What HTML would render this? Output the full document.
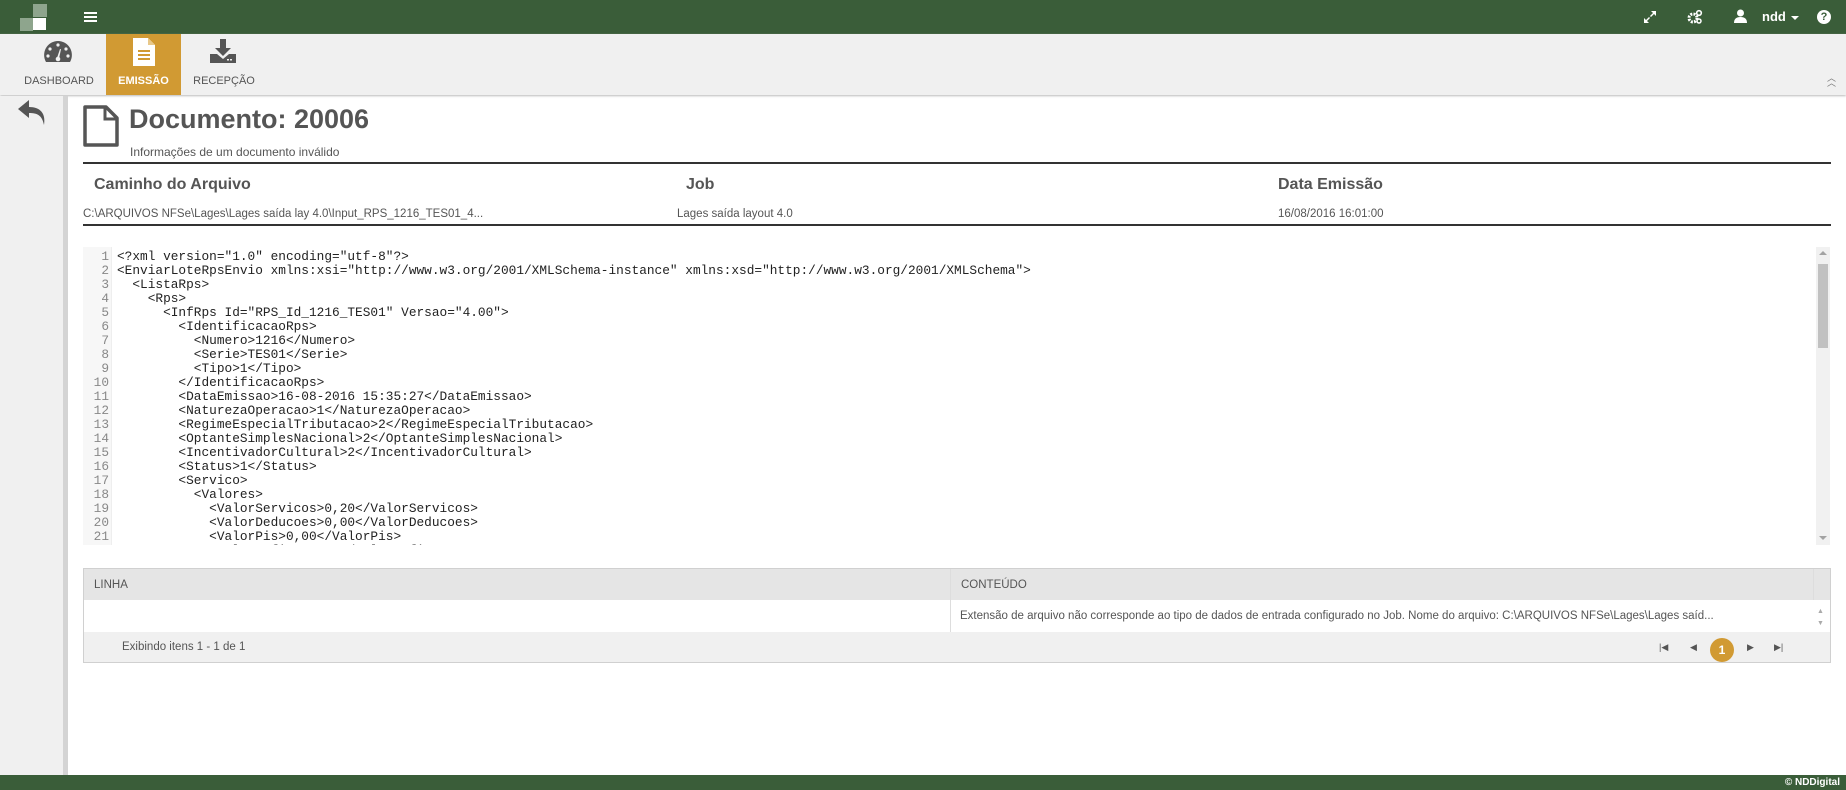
<!DOCTYPE html>
<html><head><meta charset="utf-8"><style>
*{margin:0;padding:0;box-sizing:border-box}
body{width:1846px;height:790px;overflow:hidden;background:#fff;font-family:"Liberation Sans",sans-serif;color:#555;position:relative}
.abs{position:absolute}
#top{left:0;top:0;width:1846px;height:34px;background:#3a5d39}
#nav{left:0;top:34px;width:1846px;height:61px;background:#f0f0f0;box-shadow:0 1px 2px #bbb}
.tab{position:absolute;top:0;height:61px;text-align:center;font-size:11px;color:#555}
.tab span{position:absolute;left:0;right:0;top:41px}
#side{left:0;top:96px;width:68px;height:679px;background:#f0f0f0;border-right:5px solid #d4d4d4}
.hdr{font-size:16px;font-weight:bold;color:#555;top:176px}
.val{font-size:11.5px;color:#555;top:208px}
#code{left:83px;top:247px;width:1747px;height:298px;overflow:hidden;background:#fff}
#gut{left:0;top:0;width:29px;height:298px;background:#f7f7f7;border-right:1px solid #eee}
pre{font-family:"Liberation Mono",monospace;font-size:12.8px;line-height:14px;color:#222}
#nums{position:absolute;left:0;top:3px;width:26px;text-align:right;color:#888}
#src{position:absolute;left:34px;top:3px}
#grid{left:83px;top:568px;width:1748px;height:95px;border:1px solid #d0d0d0;background:#f0f0f0}
</style></head><body>
<div id="top" class="abs">
  <div class="abs" style="left:33px;top:4px;width:14px;height:13px;background:#8ea58d"></div>
  <div class="abs" style="left:20px;top:18px;width:13px;height:13px;background:#8ea58d"></div>
  <div class="abs" style="left:33px;top:18px;width:13px;height:12px;background:#fff"></div>
  <div class="abs" style="left:84px;top:12px;width:13px;height:2px;background:#fff;box-shadow:0 4px 0 #fff,0 8px 0 #fff"></div>
  <svg class="abs" style="left:1643px;top:10px" width="14" height="14" viewBox="0 0 14 14"><path d="M8 1h5v5l-2-2-3 3-1-1 3-3zM6 13H1V8l2 2 3-3 1 1-3 3z" fill="#fff"/></svg>
  <svg class="abs" style="left:1687px;top:9px" width="16" height="16" viewBox="0 0 16 16"><circle cx="6" cy="9" r="4" fill="none" stroke="#fff" stroke-width="3" stroke-dasharray="2 1.2"/><circle cx="12" cy="4" r="2.3" fill="none" stroke="#fff" stroke-width="1.6"/><circle cx="12" cy="12" r="2" fill="none" stroke="#fff" stroke-width="1.5"/></svg>
  <svg class="abs" style="left:1734px;top:9px" width="13" height="14" viewBox="0 0 13 14"><circle cx="6.5" cy="4" r="3.5" fill="#fff"/><path d="M0 14q0-6 6.5-6t6.5 6z" fill="#fff"/></svg>
  <div class="abs" style="left:1762px;top:9px;color:#fff;font-size:13px;font-weight:bold">ndd</div>
  <div class="abs" style="left:1791px;top:16px;border:4px solid transparent;border-top:4px solid #fff"></div>
  <div class="abs" style="left:1817px;top:10px;width:14px;height:14px;border-radius:50%;background:#fff;color:#3a5d39;font-size:11px;font-weight:bold;text-align:center;line-height:14px">?</div>
</div>
<div id="nav" class="abs">
  <div class="tab" style="left:18px;width:82px">
    <svg class="abs" style="left:25px;top:6px" width="30" height="25" viewBox="0 0 30 25"><path d="M15 1A14 14 0 0 0 3 22h24A14 14 0 0 0 15 1z" fill="#555"/><circle cx="15" cy="5" r="1.6" fill="#f0f0f0"/><circle cx="7" cy="9" r="1.6" fill="#f0f0f0"/><circle cx="23" cy="9" r="1.6" fill="#f0f0f0"/><circle cx="5" cy="16" r="1.6" fill="#f0f0f0"/><circle cx="25" cy="16" r="1.6" fill="#f0f0f0"/><path d="M14 18l3-9 1 .3-2 9.2z" fill="#f0f0f0"/><circle cx="15" cy="19" r="2.3" fill="#f0f0f0"/></svg>
    <span>DASHBOARD</span></div>
  <div class="tab" style="left:106px;width:75px;background:#d19a33;color:#fff;font-weight:bold">
    <svg class="abs" style="left:26px;top:4px" width="24" height="28" viewBox="0 0 24 28"><path d="M1 0h15l7 7v21H1z" fill="#fff"/><path d="M16 0v7h7" fill="#e8c88a"/><rect x="6" y="12" width="12" height="2" fill="#d19a33"/><rect x="6" y="16" width="12" height="2" fill="#d19a33"/><rect x="6" y="20" width="12" height="2" fill="#d19a33"/></svg>
    <span>EMISSÃO</span></div>
  <div class="tab" style="left:190px;width:68px">
    <svg class="abs" style="left:20px;top:5px" width="26" height="24" viewBox="0 0 26 24"><path d="M10 0h6v9h5l-8 8-8-8h5z" fill="#555"/><path d="M0 15h7l6 5 6-5h7v9H0z" fill="#555"/><rect x="20" y="20" width="2" height="1.5" fill="#f0f0f0"/><rect x="17" y="20" width="2" height="1.5" fill="#f0f0f0"/></svg>
    <span>RECEPÇÃO</span></div>
  <div class="abs" style="left:1827px;top:42px;font-size:9px;color:#777;line-height:5px">︿<br>︿</div>
</div>
<div id="side" class="abs">
  <svg class="abs" style="left:18px;top:4px" width="30" height="26" viewBox="0 0 30 26"><path d="M11 0L0 9l11 9v-5c8 0 13 2 15 12 2-12-4-18-15-18z" fill="#555"/></svg>
</div>
<svg class="abs" style="left:83px;top:105px" width="36" height="42" viewBox="0 0 36 42"><path d="M2 2h21l11 11v27H2z" fill="none" stroke="#555" stroke-width="3.5" stroke-linejoin="round"/><path d="M22 2v12h12" fill="none" stroke="#555" stroke-width="3"/></svg>
<div class="abs" style="left:129px;top:104px;font-size:27px;font-weight:bold;color:#555">Documento: 20006</div>
<div class="abs" style="left:130px;top:145px;font-size:12px;color:#555">Informações de um documento inválido</div>
<div class="abs" style="left:83px;top:162px;width:1748px;height:2px;background:#333"></div>
<div class="abs hdr" style="left:94px">Caminho do Arquivo</div>
<div class="abs hdr" style="left:686px">Job</div>
<div class="abs hdr" style="left:1278px">Data Emissão</div>
<div class="abs val" style="left:83px">C:\ARQUIVOS NFSe\Lages\Lages saída lay 4.0\Input_RPS_1216_TES01_4...</div>
<div class="abs val" style="left:677px">Lages saída layout 4.0</div>
<div class="abs val" style="left:1278px">16/08/2016 16:01:00</div>
<div class="abs" style="left:83px;top:224px;width:1748px;height:2px;background:#333"></div>
<div id="code" class="abs">
  <div id="gut" class="abs"></div>
<pre id="nums">1
2
3
4
5
6
7
8
9
10
11
12
13
14
15
16
17
18
19
20
21
22</pre>
<pre id="src">&lt;?xml version="1.0" encoding="utf-8"?&gt;
&lt;EnviarLoteRpsEnvio xmlns:xsi="http://www.w3.org/2001/XMLSchema-instance" xmlns:xsd="http://www.w3.org/2001/XMLSchema"&gt;
  &lt;ListaRps&gt;
    &lt;Rps&gt;
      &lt;InfRps Id="RPS_Id_1216_TES01" Versao="4.00"&gt;
        &lt;IdentificacaoRps&gt;
          &lt;Numero&gt;1216&lt;/Numero&gt;
          &lt;Serie&gt;TES01&lt;/Serie&gt;
          &lt;Tipo&gt;1&lt;/Tipo&gt;
        &lt;/IdentificacaoRps&gt;
        &lt;DataEmissao&gt;16-08-2016 15:35:27&lt;/DataEmissao&gt;
        &lt;NaturezaOperacao&gt;1&lt;/NaturezaOperacao&gt;
        &lt;RegimeEspecialTributacao&gt;2&lt;/RegimeEspecialTributacao&gt;
        &lt;OptanteSimplesNacional&gt;2&lt;/OptanteSimplesNacional&gt;
        &lt;IncentivadorCultural&gt;2&lt;/IncentivadorCultural&gt;
        &lt;Status&gt;1&lt;/Status&gt;
        &lt;Servico&gt;
          &lt;Valores&gt;
            &lt;ValorServicos&gt;0,20&lt;/ValorServicos&gt;
            &lt;ValorDeducoes&gt;0,00&lt;/ValorDeducoes&gt;
            &lt;ValorPis&gt;0,00&lt;/ValorPis&gt;
            &lt;ValorCofins&gt;0,00&lt;/ValorCofins&gt;</pre>
  <div class="abs" style="left:1733px;top:0;width:14px;height:298px;background:#f1f1f1"></div>
  <div class="abs" style="left:1735px;top:17px;width:10px;height:84px;background:#c1c1c1"></div>
  <div class="abs" style="left:1736px;top:4px;border:4px solid transparent;border-bottom:4px solid #a3a3a3;border-top:0"></div>
  <div class="abs" style="left:1736px;top:289px;border:4px solid transparent;border-top:4px solid #a3a3a3;border-bottom:0"></div>
</div>
<div id="grid" class="abs">
  <div class="abs" style="left:0;top:0;width:1746px;height:31px;background:#e5e5e5"></div>
  <div class="abs" style="left:10px;top:10px;font-size:11.5px;color:#555">LINHA</div>
  <div class="abs" style="left:877px;top:10px;font-size:11.5px;color:#555">CONTEÚDO</div>
  <div class="abs" style="left:0;top:31px;width:1746px;height:32px;background:#fff"></div>
  <div class="abs" style="left:866px;top:0;width:1px;height:63px;background:#ddd"></div>
  <div class="abs" style="left:1729px;top:0;width:1px;height:31px;background:#ddd"></div>
  <div class="abs" style="left:876px;top:41px;font-size:11.5px;color:#555;white-space:nowrap">Extensão de arquivo não corresponde ao tipo de dados de entrada configurado no Job. Nome do arquivo: C:\ARQUIVOS NFSe\Lages\Lages saíd...</div>
  <div class="abs" style="left:1733px;top:37px;font-size:7px;color:#aaa;line-height:12px">▲<br>▼</div>
  <div class="abs" style="left:38px;top:72px;font-size:11.5px;color:#555">Exibindo itens 1 - 1 de 1</div>
  <div class="abs" style="left:1575px;top:73px;font-size:9px;color:#555">|◀</div>
  <div class="abs" style="left:1606px;top:73px;font-size:9px;color:#555">◀</div>
  <div class="abs" style="left:1626px;top:69px;width:24px;height:24px;border-radius:50%;background:#d19a33;color:#fff;font-size:12px;font-weight:bold;text-align:center;line-height:24px">1</div>
  <div class="abs" style="left:1663px;top:73px;font-size:9px;color:#555">▶</div>
  <div class="abs" style="left:1690px;top:73px;font-size:9px;color:#555">▶|</div>
</div>
<div class="abs" style="left:0;top:775px;width:1846px;height:15px;background:#3a5d39;color:#fff;font-size:10px;font-weight:bold;text-align:right;padding-right:6px;line-height:15px">© NDDigital</div>
</body></html>
